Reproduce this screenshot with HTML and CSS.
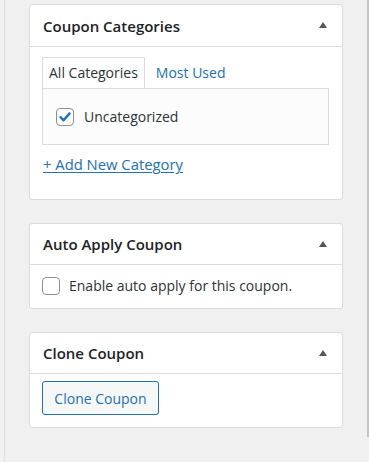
FILE: index.html
```html
<!DOCTYPE html>
<html>
<head>
<meta charset="utf-8">
<link rel="stylesheet" href="styles.css">
</head>
<body>
<div class="page">
  <div class="gutter"></div>
  <div class="rule"></div>
  <div class="sidebar">
    <section class="card">
      <header class="card-head tall">
        <h2 class="card-title">Coupon Categories</h2>
        <svg class="toggle" width="10" height="8" viewBox="0 0 10 8"><path d="M5 1 L9 7 L1 7 Z" fill="#50575e"/></svg>
      </header>
      <div class="card-body cat-body">
        <ul class="tabs">
          <li class="tab active">All Categories</li>
          <li class="tab link">Most Used</li>
        </ul>
        <div class="panel">
          <label class="check-row">
            <span class="checkbox checked"><svg width="14" height="14" viewBox="0 0 14 14"><path d="M2.5 7.2 L5.6 10.3 L11.6 3.4" fill="none" stroke="#2271b1" stroke-width="2.4" stroke-linecap="round" stroke-linejoin="round"/></svg></span>
            <span>Uncategorized</span>
          </label>
        </div>
        <a class="add-link" href="#">+ Add New Category</a>
      </div>
    </section>

    <section class="card">
      <header class="card-head">
        <h2 class="card-title">Auto Apply Coupon</h2>
        <svg class="toggle" width="10" height="8" viewBox="0 0 10 8"><path d="M5 1 L9 7 L1 7 Z" fill="#50575e"/></svg>
      </header>
      <div class="card-body auto-body">
        <label class="check-row">
          <span class="checkbox"></span>
          <span>Enable auto apply for this coupon.</span>
        </label>
      </div>
    </section>

    <section class="card">
      <header class="card-head">
        <h2 class="card-title">Clone Coupon</h2>
        <svg class="toggle" width="10" height="8" viewBox="0 0 10 8"><path d="M5 1 L9 7 L1 7 Z" fill="#50575e"/></svg>
      </header>
      <div class="card-body clone-body">
        <button class="btn">Clone Coupon</button>
      </div>
    </section>
  </div>
  <div class="scroll-zone"><div class="scroll-bar"></div></div>
</div>
</body>
</html>
```
FILE: styles.css
```css
* { box-sizing: border-box; }
html, body { margin: 0; padding: 0; }
body {
  background: #f0f0f1;
  font-family: "Open Sans", "Noto Sans", sans-serif;
  color: #2c3338;
  font-size: 14px;
}
.page {
  display: flex;
  height: 462px;
}
.gutter { width: 4px; }
.rule { width: 1px; background: #e0e0e0; }
.sidebar {
  width: 338px;
  padding: 4px 0 0 24px;
  display: flex;
  flex-direction: column;
  gap: 23px;
}
.card {
  width: 314px;
  background: #fff;
  border: 1px solid #dcdcde;
  border-radius: 3px;
}
.card-head {
  display: flex;
  align-items: center;
  justify-content: space-between;
  height: 41px;
  padding: 0 14px 0 13px;
  border-bottom: 1px solid #dcdcde;
}
.card-head.tall { height: 42px; }
.card-title {
  margin: 0;
  font-size: 15px;
  font-weight: 600;
  color: #1d2327;
}
.toggle { display: block; margin-top: -1px; }
.cat-body { padding: 10px 12px 25px; }
.tabs {
  display: flex;
  list-style: none;
  margin: 0;
  padding: 0;
  position: relative;
  z-index: 1;
}
.tab {
  height: 31px;
  padding: 0 6px;
  font-size: 14px;
  line-height: 30px;
  border: 1px solid transparent;
  border-bottom: none;
}
.tab.active {
  border-color: #dcdcde;
  background: #fff;
  color: #2c3338;
  margin-bottom: -1px;
}
.tab.link { color: #2271b1; padding-left: 10px; }
.panel {
  height: 57px;
  width: 287px;
  border: 1px solid #dcdcde;
  background: #fcfcfc;
  padding: 0 13px;
  display: flex;
  align-items: center;
}
.check-row {
  display: flex;
  align-items: center;
  gap: 10px;
  font-size: 14px;
  color: #2c3338;
}
.checkbox {
  width: 18px;
  height: 18px;
  border: 1px solid #8c8f94;
  border-radius: 4px;
  background: #fff;
  display: flex;
  align-items: center;
  justify-content: center;
  flex: none;
}
.add-link {
  display: inline-block;
  margin: 9px 0 0 1px;
  font-size: 14.8px;
  line-height: 20px;
  color: #2271b1;
  text-decoration: underline;
  text-underline-offset: 2px;
}
.auto-body { padding: 11px 12px 13px; }
.auto-body .check-row { gap: 9px; }
.clone-body { padding: 7px 12px 12px; }
.btn {
  display: block;
  height: 34px;
  width: 117px;
  padding: 0;
  font-family: inherit;
  font-size: 14px;
  color: #2271b1;
  background: #f6f7f7;
  border: 1px solid #2271b1;
  border-radius: 3px;
}
.scroll-zone {
  flex: 1;
  display: flex;
  justify-content: flex-end;
}
.scroll-bar {
  width: 2px;
  height: 437px;
  background: #c3c4c7;
}
```
